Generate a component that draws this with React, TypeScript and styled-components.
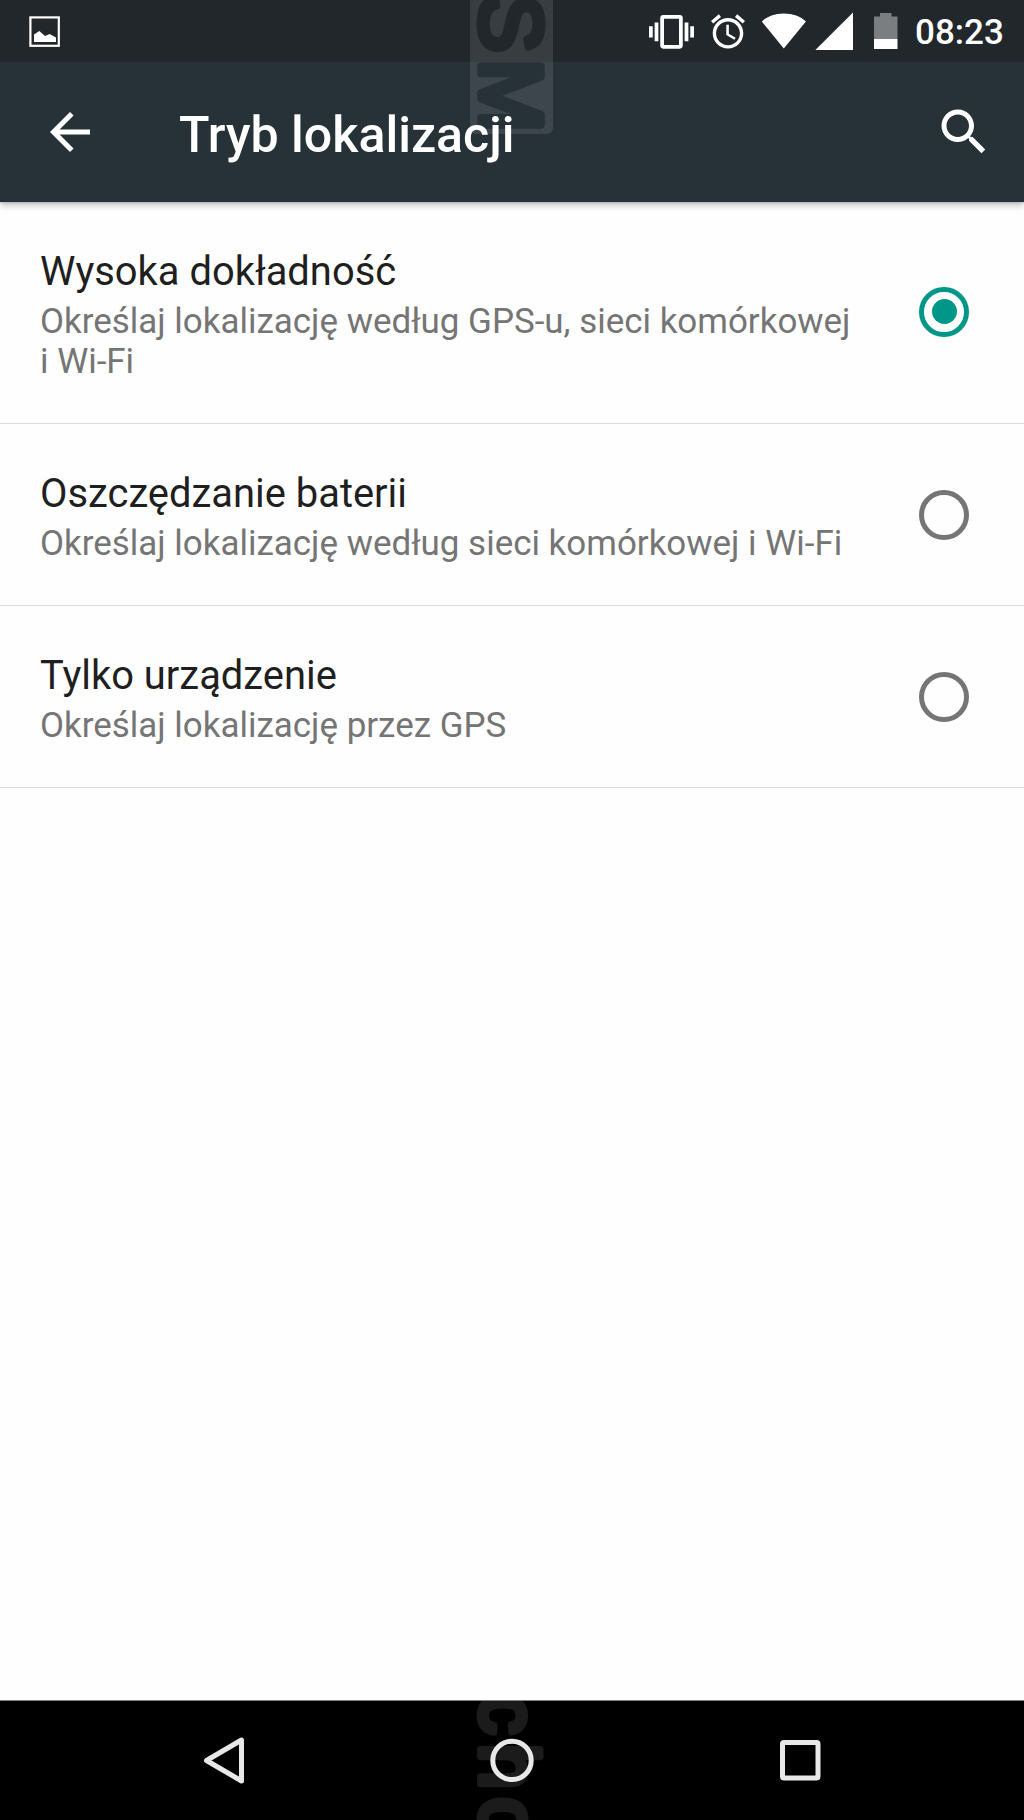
import React from 'react';
import styled, { createGlobalStyle } from 'styled-components';

const GlobalStyle = createGlobalStyle`
  html, body { margin: 0; padding: 0; background: #fefefe; }
  * { box-sizing: border-box; }
`;

const Screen = styled.div`
  width: 1024px;
  height: 1820px;
  display: flex;
  flex-direction: column;
  overflow: hidden;
  background: #fefefe;
  font-family: Roboto, "Noto Sans", sans-serif;
`;

const Top = styled.header`
  position: relative;
  z-index: 1;
  flex: none;
  box-shadow: 0 1px 2px rgba(0, 0, 0, 0.15), 0 4px 6px rgba(0, 0, 0, 0.2);
`;

const StatusBar = styled.div`
  height: 62px;
  padding: 0 21px 0 29px;
  display: flex;
  align-items: center;
  background: #22272b;
`;

const Spacer = styled.div`
  flex: 1;
`;

const Glyph = styled.svg<{ $w: number; $h: number; $gap?: number }>`
  position: relative;
  z-index: 1;
  display: block;
  flex: none;
  overflow: visible;
  width: ${(p) => p.$w}px;
  height: ${(p) => p.$h}px;
  margin-right: ${(p) => p.$gap ?? 0}px;
`;

const Clock = styled.time`
  width: 88px;
  padding: 3px 1px 0 0;
  font-size: 35px;
  font-weight: 500;
  line-height: 42px;
  text-align: right;
  white-space: nowrap;
  color: #fff;
`;

const ActionBar = styled.div`
  height: 140px;
  padding: 0 30px 0 40px;
  display: flex;
  align-items: center;
  background: #263238;
`;

const IconButton = styled.button`
  position: relative;
  z-index: 1;
  padding: 0;
  border: 0;
  background: none;
  cursor: pointer;
`;

const Title = styled.h1`
  position: relative;
  z-index: 1;
  flex: 1;
  margin: 0;
  padding: 5px 0 0 79px;
  font-size: 50.1px;
  font-weight: 500;
  line-height: 60px;
  color: #fff;
`;

const TopMark = styled.svg`
  position: absolute;
  left: 470px;
  top: 0;
  width: 83px;
  height: 135px;
`;

const NavMark = styled.svg`
  position: absolute;
  left: 470px;
  top: 0;
  width: 83px;
  height: 120px;
`;

const Options = styled.main`
  flex: 1;
`;

const Option = styled.div<{ $height: number }>`
  height: ${(p) => p.$height}px;
  padding: 46px 55px 0 40px;
  display: grid;
  grid-template-columns: 830px 50px;
  justify-content: space-between;
  border-bottom: 1px solid #dcdcdc;
`;

const Label = styled.div`
  font-size: 39.9px;
  line-height: 47px;
  color: #1f1f1f;
`;

const Summary = styled.div`
  margin-top: 7px;
  font-size: 34.95px;
  line-height: 40.3px;
  color: #757575;
`;

const Radio = styled.span<{ $on: boolean }>`
  align-self: center;
  width: 50px;
  height: 50px;
  margin-top: ${(p) => (p.$on ? -48 : -46)}px;
  display: grid;
  place-items: center;
  border: 5px solid ${(p) => (p.$on ? '#009688' : '#757575')};
  border-radius: 50%;

  &::after {
    content: '';
    width: 25px;
    height: 25px;
    border-radius: 50%;
    background: ${(p) => (p.$on ? '#009688' : 'transparent')};
  }
`;

const NavBar = styled.nav`
  position: relative;
  flex: none;
  height: 120px;
  padding-bottom: 1px;
  display: grid;
  grid-template-columns: repeat(3, 288px);
  justify-content: center;
  align-items: center;
  justify-items: center;
  border-top: 1px solid #808080;
  background: #000;
`;

const options = [
  {
    label: 'Wysoka dokładność',
    summary: 'Określaj lokalizację według GPS-u, sieci komórkowej i\u00a0Wi-Fi',
    height: 222,
    on: true,
  },
  {
    label: 'Oszczędzanie baterii',
    summary: 'Określaj lokalizację według sieci komórkowej i Wi-Fi',
    height: 182,
    on: false,
  },
  { label: 'Tylko urządzenie', summary: 'Określaj lokalizację przez GPS', height: 182, on: false },
];

export default function App() {
  return (
    <>
      <GlobalStyle />
      <Screen>
        <Top>
          <StatusBar>
            <Glyph $w={31} $h={31} viewBox="0 0 31 31">
              <rect x="1.4" y="1.4" width="28.4" height="28.4" fill="none" stroke="#fff" strokeWidth="2.2" />
              <path d="M5 26V18.5L10.3 15L16 20L20.7 18L27 21.5V26Z" fill="#fff" />
            </Glyph>
            <Spacer />
            <Glyph $w={45} $h={34} $gap={17} viewBox="0 2.6 24 18" fill="#fff">
              <path d="M0 15h2V9H0v6zm3 2h2V7H3v10zm19-8v6h2V9h-2zm-3 8h2V7h-2v10zM16.5 3h-9C6.67 3 6 3.67 6 4.5v15c0 .83.67 1.5 1.5 1.5h9c.83 0 1.5-.67 1.5-1.5v-15c0-.83-.67-1.5-1.5-1.5zM16 19H8V5h8v14z" />
            </Glyph>
            <Glyph $w={34} $h={35} $gap={16} viewBox="2 1.7 20 20.5" fill="#fff">
              <path d="M22 5.72l-4.6-3.86-1.29 1.53 4.6 3.86L22 5.72zM7.88 3.39L6.6 1.86 2 5.71l1.29 1.53 4.59-3.85zM12.5 8H11v6l4.75 2.85.75-1.23-4-2.37V8zM12 4c-4.97 0-9 4.03-9 9s4.02 9 9 9c4.97 0 9-4.03 9-9s-4.03-9-9-9zm0 16c-3.87 0-7-3.13-7-7s3.13-7 7-7 7 3.13 7 7-3.13 7-7 7z" />
            </Glyph>
            <Glyph $w={45} $h={36} $gap={9} viewBox="0 0 45 36" fill="#fff">
              <path d="M22.8 35.5L.8 8.5C6 3.5 14 .6 22.800.6S39.700 3.500 44.900 8.500Z" />
            </Glyph>
            <Glyph $w={38} $h={38} $gap={21} viewBox="0 0 38 38" fill="#fff">
              <path d="M.4 38H38V.4Z" />
            </Glyph>
            <Glyph $w={24} $h={36} $gap={17} viewBox="0 0 24 36">
              <path d="M0 26V3.500H6V0H17.500V3.500H23.500V26Z" fill="#7b7e80" />
              <path d="M0 26H23.500V36H0Z" fill="#fff" />
            </Glyph>
            <Clock>08:23</Clock>
          </StatusBar>
          <ActionBar>
            <IconButton aria-label="Wstecz">
              <Glyph $w={60} $h={60} viewBox="0 0 24 24" fill="#fff">
                <path d="M20 11H7.830l5.590-5.590L12 4l-8 8 8 8 1.410-1.410L7.830 13H20v-2z" />
              </Glyph>
            </IconButton>
            <Title>Tryb lokalizacji</Title>
            <IconButton aria-label="Szukaj">
              <Glyph $w={60} $h={60} viewBox="0 0 24 24" fill="#fff">
                <path d="M15.500 14h-.79l-.28-.27C15.410 12.590 16 11.110 16 9.500 16 5.910 13.090 3 9.500 3S3 5.910 3 9.500 5.910 16 9.500 16c1.610 0 3.090-.59 4.230-1.570l.27.28v.79l5 4.990L20.490 19l-4.990-5zm-6 0C7.010 14 5 11.990 5 9.500S7.010 5 9.500 5 14 7.010 14 9.500 11.990 14 9.500 14z" />
              </Glyph>
            </IconButton>
          </ActionBar>
          <TopMark viewBox="0 0 83 135" aria-hidden="true">
            <path d="M0 0H83V128a6 6 0 0 1-6 6H6a6 6 0 0 1-6-6Z" fill="#fff" fillOpacity="0.1" />
            <g
              transform="translate(10.500 0) rotate(90)"
              fontFamily="Liberation Sans, Arial, sans-serif"
              fontSize="88"
              strokeWidth="7.500"
              strokeLinejoin="round"
            >
              <text x="-6" y="0" fill="#22272b" stroke="#22272b" strokeWidth="7">S</text>
              <text x="59" y="0" fill="#263238" stroke="#263238">M</text>
            </g>
          </TopMark>
        </Top>
        <Options role="radiogroup">
          {options.map((o) => (
            <Option key={o.label} $height={o.height} role="radio" aria-checked={o.on}>
              <div>
                <Label>{o.label}</Label>
                <Summary>{o.summary}</Summary>
              </div>
              <Radio $on={o.on} />
            </Option>
          ))}
        </Options>
        <NavBar>
          <NavMark viewBox="0 0 83 120" aria-hidden="true">
            <text
              transform="translate(10.500 0) rotate(90)"
              x="-7 43 96.500"
              y="0"
              fontFamily="Liberation Sans, Arial, sans-serif"
              fontSize="81"
              fill="#1b1b1b"
              stroke="#1b1b1b"
              strokeWidth="7"
              strokeLinejoin="round"
            >
              cho
            </text>
          </NavMark>
          <IconButton aria-label="Wstecz">
            <Glyph $w={42} $h={48} viewBox="0 0 42 48">
              <path d="M3.500 24.500L38.500 4V45Z" fill="none" stroke="#e8e8e8" strokeWidth="5" strokeLinejoin="round" />
            </Glyph>
          </IconButton>
          <IconButton aria-label="Ekran główny">
            <Glyph $w={44} $h={44} viewBox="0 0 44 44">
              <circle cx="22" cy="22.400" r="19.200" fill="none" stroke="#e8e8e8" strokeWidth="5" />
            </Glyph>
          </IconButton>
          <IconButton aria-label="Ostatnie">
            <Glyph $w={42} $h={42} viewBox="0 0 42 42">
              <rect x="3.500" y="3.500" width="35.500" height="35.500" rx="1.500" fill="none" stroke="#e8e8e8" strokeWidth="5" />
            </Glyph>
          </IconButton>
        </NavBar>
      </Screen>
    </>
  );
}
